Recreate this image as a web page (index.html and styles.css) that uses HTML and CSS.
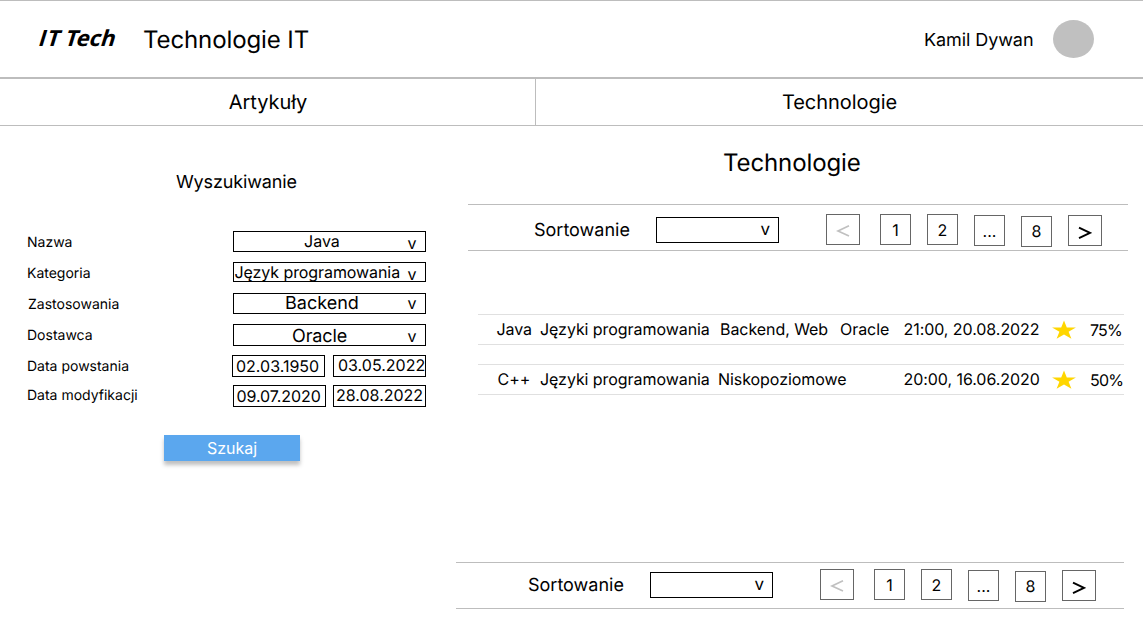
FILE: index.html
```html
<!DOCTYPE html>
<html lang="pl">
<head>
<meta charset="utf-8">
<title>Technologie IT</title>
<link rel="stylesheet" href="styles.css">
</head>
<body>
<header class="header">
  <span class="logo"><span class="logo-i">I</span>T Tech</span>
  <h1 class="site-title">Technologie IT</h1>
  <span class="user">Kamil Dywan</span>
  <span class="avatar"></span>
</header>
<nav class="nav">
  <a class="nav-item nav-articles"><span>Artykuły</span></a>
  <a class="nav-item nav-tech"><span>Technologie</span></a>
</nav>
<main class="main">
  <section class="search">
    <h2 class="search-title">Wyszukiwanie</h2>
    <div class="row name"><label class="label">Nazwa</label><div class="field"><span class="value">Java</span><span class="arrow">v</span></div></div>
    <div class="row category"><label class="label">Kategoria</label><div class="field"><span class="value">Język programowania</span><span class="arrow">v</span></div></div>
    <div class="row usage"><label class="label">Zastosowania</label><div class="field"><span class="value">Backend</span><span class="arrow">v</span></div></div>
    <div class="row vendor"><label class="label">Dostawca</label><div class="field"><span class="value">Oracle</span><span class="arrow">v</span></div></div>
    <div class="row created"><label class="label">Data powstania</label><div class="date from"><span>02.03.1950</span></div><div class="date to"><span>03.05.2022</span></div></div>
    <div class="row modified"><label class="label">Data modyfikacji</label><div class="date from"><span>09.07.2020</span></div><div class="date to"><span>28.08.2022</span></div></div>
    <button class="submit">Szukaj</button>
  </section>
  <section class="results">
    <h2 class="results-title">Technologie</h2>
    <div class="toolbar toolbar-top">
      <span class="sort-label">Sortowanie</span>
      <div class="sort"><span>v</span></div>
      <div class="page prev"><svg width="14" height="14" viewBox="0 0 14 14"><path d="M13 1.700 2 6.900l11 5.200"/></svg></div>
      <div class="page one"><span>1</span></div>
      <div class="page"><span>2</span></div>
      <div class="page dots"><span>...</span></div>
      <div class="page eight"><span>8</span></div>
      <div class="page next"><svg width="14" height="14" viewBox="0 0 14 14"><path d="m1 1.700 11 5.200-11 5.200"/></svg></div>
    </div>
    <div class="list">
      <div class="item">
        <span class="c-name">Java</span><span class="c-cat">Języki programowania</span><span class="c-use">Backend, Web</span><span class="c-vendor">Oracle</span><span class="c-date">21:00, 20.08.2022</span>
        <svg class="star" width="24" height="20" viewBox="0 0 24 20"><path d="m12 .5 2.800 7h9.100l-7.300 4.300 2.800 7L12 14.500l-7.400 4.300 2.800-7L.1 7.500h9.100z"/></svg>
        <span class="c-score">75%</span>
      </div>
      <div class="item">
        <span class="c-name cpp">C++</span><span class="c-cat">Języki programowania</span><span class="c-use low">Niskopoziomowe</span><span class="c-vendor"></span><span class="c-date">20:00, 16.06.2020</span>
        <svg class="star" width="24" height="20" viewBox="0 0 24 20"><path d="m12 .5 2.800 7h9.100l-7.300 4.300 2.800 7L12 14.500l-7.400 4.300 2.800-7L.1 7.500h9.100z"/></svg>
        <span class="c-score">50%</span>
      </div>
    </div>
    <div class="toolbar toolbar-bottom">
      <span class="sort-label">Sortowanie</span>
      <div class="sort"><span>v</span></div>
      <div class="page prev"><svg width="14" height="14" viewBox="0 0 14 14"><path d="M13 1.700 2 6.900l11 5.200"/></svg></div>
      <div class="page one"><span>1</span></div>
      <div class="page"><span>2</span></div>
      <div class="page dots"><span>...</span></div>
      <div class="page eight"><span>8</span></div>
      <div class="page next"><svg width="14" height="14" viewBox="0 0 14 14"><path d="m1 1.700 11 5.200-11 5.200"/></svg></div>
    </div>
  </section>
</main>
</body>
</html>
```
FILE: styles.css
```css
* { box-sizing: border-box; }
body {
  margin: 0;
  width: 1143px;
  height: 635px;
  overflow: hidden;
  background: #fff;
  color: #000;
  font-family: Inter, sans-serif;
  font-size: 16px;
  line-height: 20px;
  white-space: nowrap;
  text-rendering: geometricPrecision;
}
h1, h2 { margin: 0; font-weight: 400; }

.header {
  display: flex;
  align-items: flex-start;
  height: 79px;
  padding-left: 40px;
  border-top: 1px solid #bdbdbd;
  border-bottom: 2px solid #bdbdbd;
}
.logo {
  width: 103px;
  margin-top: 22px;
  font: 700 22px/30px "Noto Sans", sans-serif;
  transform: skewX(-17deg);
}
.logo-i { margin-right: 1.500px; font-family: Inter, sans-serif; }
.site-title { width: 781px; margin-top: 24px; font-size: 24px; line-height: 30px; letter-spacing: -.1px; }
.user { width: 129px; margin-top: 29px; font-size: 18px; line-height: 22px; letter-spacing: -.08px; }
.avatar { width: 41px; height: 38px; margin-top: 19px; border-radius: 50%; background: #c0c0c0; }

.nav {
  display: flex;
  height: 47px;
  border-bottom: 1px solid #bdbdbd;
  font-size: 20px;
  line-height: 46px;
  text-align: center;
  letter-spacing: -.05px;
}
.nav-articles { width: 536px; padding-left: 1px; border-right: 1px solid #bdbdbd; }
.nav-tech { flex: 1; }

.main { display: flex; }
.search { width: 456px; height: 509px; padding-left: 27px; }
.search-title { margin: 46px 0 0 149px; font-size: 18px; line-height: 22px; letter-spacing: -.13px; }
.row { display: flex; align-items: flex-start; }
.label { width: 206px; margin-top: 2px; font-size: 14px; line-height: 20px; }
.field {
  display: flex;
  width: 193px;
  height: 21px;
  border: 1px solid #000;
  line-height: 19px;
}
.arrow { width: 17.500px; margin-left: auto; }
.date { width: 93px; height: 22px; border: 1px solid #000; line-height: 20px; }
.name { height: 31px; margin-top: 37px; }
.name .value { margin-left: 70px; }
.name .arrow { margin-top: 2px; }
.category { height: 31px; }
.category .field { height: 20px; }
.category .value { margin-left: .5px; letter-spacing: -.08px; }
.category .arrow { margin-top: 2px; }
.usage { height: 31px; }
.usage .label { padding-left: 1px; }
.usage .value { margin-left: 51px; font-size: 18px; }
.vendor { height: 31px; }
.vendor .field { height: 22px; }
.vendor .value { margin: 2px 0 0 58px; font-size: 18px; letter-spacing: -.1px; }
.vendor .arrow { margin-top: 2px; }
.created { height: 30px; }
.created .label { width: 205px; }
.created .from { padding-left: 3px; margin-right: 8px; }
.created .to { padding-left: 4px; line-height: 19px; }
.modified { height: 50px; }
.modified .label { margin-top: 1px; }
.modified .from { padding-left: 2.500px; margin-right: 7px; letter-spacing: -.07px; }
.modified .to { padding-left: 2px; line-height: 19px; }
.submit {
  display: block;
  width: 136px;
  height: 26px;
  margin-left: 137px;
  padding: 0;
  border: 0;
  background: #5ba7ee;
  box-shadow: 0 4px 4px rgba(0, 0, 0, .25);
  color: #fff;
  font: 16px/26px Inter, sans-serif;
}

.results { width: 687px; }
.results-title { margin: 22px 0 0 267px; font-size: 24px; line-height: 30px; letter-spacing: -.1px; }
.toolbar {
  display: flex;
  align-items: flex-start;
  height: 47px;
  border-top: 1px solid #bdbdbd;
  border-bottom: 1px solid #bdbdbd;
}
.toolbar-top { width: 660px; margin: 26px 0 0 12px; padding: 9px 0 0 66px; }
.toolbar-bottom { width: 668px; padding: 6px 0 0 72px; }
.sort-label { width: 122px; margin-top: 6px; font-size: 18px; line-height: 22px; }
.sort {
  width: 123px;
  height: 26px;
  margin: 3px 47px 0 0;
  padding-right: 8px;
  border: 1px solid #000;
  font-size: 17px;
  line-height: 24px;
  text-align: right;
}
.page {
  width: 31px;
  height: 31px;
  margin-right: 16px;
  border: 1px solid #666;
  line-height: 31px;
  text-align: center;
}
.page svg { display: block; fill: none; }
.prev { width: 34px; margin-right: 20px; padding: 9px 0 0 9px; }
.prev svg { stroke: #c0c0c0; stroke-width: 1.700; }
.dots { margin-top: 1px; }
.eight { margin-top: 2px; line-height: 29px; }
.next { width: 34px; margin: 1px 0 0; padding: 10px 0 0 9px; }
.next svg { stroke: #000; stroke-width: 1.900; }

.list { height: 311px; margin-left: 22px; padding-top: 63px; }
.item {
  display: flex;
  align-items: flex-start;
  width: 646px;
  height: 31px;
  margin-bottom: 19px;
  padding: 4px 0 0 18.500px;
  border-top: 1px solid #e0e0e0;
  border-bottom: 1px solid #e0e0e0;
  letter-spacing: -.06px;
}
.c-name { width: 43.500px; }
.cpp { padding-left: 1px; }
.c-cat { width: 180px; }
.c-use { width: 120px; }
.low { margin-left: -2px; width: 122px; }
.c-vendor { width: 63.500px; }
.c-date { width: 148.500px; }
.star { width: 24px; height: 20px; margin-top: 1px; fill: #ffd600; }
.c-score { margin: 1px 0 0 14px; letter-spacing: -.8px; }
```
